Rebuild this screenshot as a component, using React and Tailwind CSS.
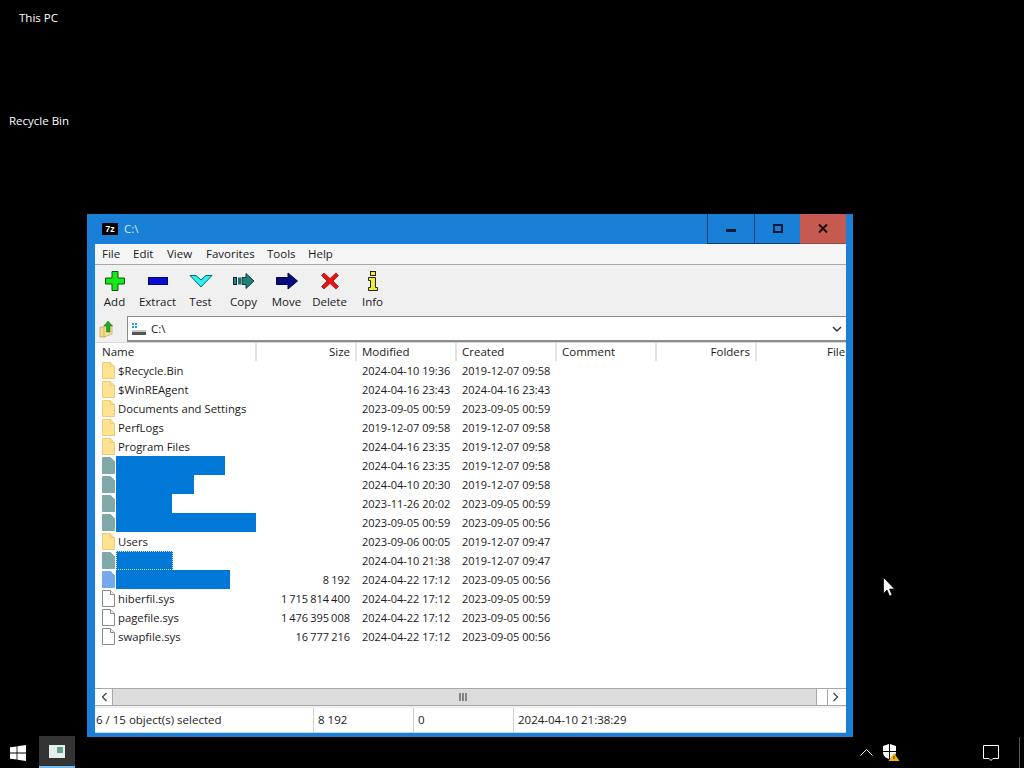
const font = { fontFamily: '"Open Sans", "Noto Sans", sans-serif' };

const rows = [
  { n: '$Recycle.Bin', m: '2024-04-10 19:36', c: '2019-12-07 09:58', t: 'folder' },
  { n: '$WinREAgent', m: '2024-04-16 23:43', c: '2024-04-16 23:43', t: 'folder' },
  { n: 'Documents and Settings', m: '2023-09-05 00:59', c: '2023-09-05 00:59', t: 'folder' },
  { n: 'PerfLogs', m: '2019-12-07 09:58', c: '2019-12-07 09:58', t: 'folder' },
  { n: 'Program Files', m: '2024-04-16 23:35', c: '2019-12-07 09:58', t: 'folder' },
  { w: 'w-[109px]', m: '2024-04-16 23:35', c: '2019-12-07 09:58', t: 'sel' },
  { w: 'w-[78px]', m: '2024-04-10 20:30', c: '2019-12-07 09:58', t: 'sel' },
  { w: 'w-[56px]', m: '2023-11-26 20:02', c: '2023-09-05 00:59', t: 'sel' },
  { w: 'w-[140px]', m: '2023-09-05 00:59', c: '2023-09-05 00:56', t: 'sel' },
  { n: 'Users', m: '2023-09-06 00:05', c: '2019-12-07 09:47', t: 'folder' },
  { w: 'w-[57px]', m: '2024-04-10 21:38', c: '2019-12-07 09:47', t: 'sel', focus: true },
  { w: 'w-[114px]', s: '8 192', m: '2024-04-22 17:12', c: '2023-09-05 00:56', t: 'selfile' },
  { n: 'hiberfil.sys', s: '1 715 814 400', m: '2024-04-22 17:12', c: '2023-09-05 00:59', t: 'file' },
  { n: 'pagefile.sys', s: '1 476 395 008', m: '2024-04-22 17:12', c: '2023-09-05 00:56', t: 'file' },
  { n: 'swapfile.sys', s: '16 777 216', m: '2024-04-22 17:12', c: '2023-09-05 00:56', t: 'file' },
];

const iconFill = { folder: '#fde28f', sel: '#82a9a9', selfile: '#74aaeb', file: '#ffffff' };
const iconLine = { folder: '#e6cd80', sel: '#82a9a9', selfile: '#74aaeb', file: '#8a8a8a' };

function RowIcon({ t }) {
  return (
    <svg width="13" height="17" viewBox="0 0 13 17" className="shrink-0">
      <path d="M0.5 0.5H8.5L12.5 4.5V16.5H0.5Z" fill={iconFill[t]} stroke={iconLine[t]} />
      <path d="M8.5 0.5V4.5H12.5" fill={t === 'file' ? '#f0f0f0' : iconFill[t]} stroke={iconLine[t]} />
    </svg>
  );
}

const tools = [
  { l: 'Add', i: <svg width="20" height="20" viewBox="0 0 20 20"><path d="M7 0.5H13V7H19.5V13H13V19.5H7V13H0.5V7H7Z" fill="#19e619" stroke="#0a5a0a" /></svg> },
  { l: 'Extract', i: <svg width="20" height="20" viewBox="0 0 20 20"><rect x="0.5" y="6.5" width="19" height="7" fill="#0a0ad0" stroke="#05056a" /></svg> },
  { l: 'Test', i: <svg width="24" height="20" viewBox="0 0 24 20"><path d="M1 4.5H7L12 9L17 4.5H23L12 16Z" fill="#2ff0f0" stroke="#0b6a6a" /></svg> },
  { l: 'Copy', i: <svg width="22" height="20" viewBox="0 0 22 20"><rect x="0.5" y="6.5" width="3" height="7" fill="#2a8a80" stroke="#123" /><rect x="5" y="6.5" width="3" height="7" fill="#1f6f6a" /><path d="M9 6.5H13V2.5L21 10L13 17.5V13.5H9Z" fill="#1f8078" stroke="#0a3a3a" /></svg> },
  { l: 'Move', i: <svg width="22" height="20" viewBox="0 0 22 20"><path d="M0.5 6.5H12V2L21.5 10L12 18V13.5H0.5Z" fill="#0a0a80" stroke="#05053a" /></svg> },
  { l: 'Delete', i: <svg width="18" height="18" viewBox="0 0 18 18"><path d="M3 1L9 6.5L15 1L17.5 3.5L12 9L17.5 14.5L15 17L9 11.5L3 17L0.5 14.5L6 9L0.5 3.5Z" fill="#e81010" stroke="#8a1010" strokeWidth="0.7" /></svg> },
  { l: 'Info', i: <svg width="12" height="20" viewBox="0 0 12 20"><rect x="3.5" y="0.5" width="5" height="4" fill="#ecec30" stroke="#222" /><path d="M1.5 6.5H8.5V16.5H10.5V19.5H1.5V16.5H3.5V9.5H1.5Z" fill="#ecec30" stroke="#222" /></svg> },
];

const Header = ({ w, right, children, pl }) => (
  <div className={`${w} h-full flex items-center pb-[1px] ${pl || 'pl-[5px]'} pr-[5px] ${right ? 'justify-end' : ''} border-r-2 border-r-[#e4e4e4] overflow-hidden`}>{children}</div>
);

export default function App() {
  return (
    <div className="relative w-[1024px] h-[768px] bg-black overflow-hidden text-[11.5px] text-[#1a1a1a]" style={font}>
      <div className="absolute left-[19px] top-[10px] text-white leading-[16px]">This PC</div>
      <div className="absolute left-[9px] top-[113px] text-white leading-[16px]">Recycle Bin</div>

      <div className="absolute left-[87px] top-[214px] w-[766px] h-[523px] bg-[#1a7fd6] flex flex-col pl-[8px] pr-[7px] pb-[4px]">
        <div className="h-[30px] shrink-0 flex items-center relative">
          <div className="ml-[7px] w-[16px] h-[12px] bg-white border border-black flex items-center justify-center">
            <span className="bg-black text-white text-[9px] leading-[10px] font-bold w-[14px] h-[10px] text-center" style={{ fontFamily: '"Liberation Sans", sans-serif' }}>7z</span>
          </div>
          <span className="ml-[6px] text-[#d5ecff]">C:\</span>
          <div className="ml-auto flex h-full">
            <div className="w-[47px] border-l border-b border-l-[#0b3f6e] border-b-[#0b3f6e] flex items-center justify-center pt-[3px]"><div className="w-[10px] h-[3px] bg-[#0b1b33]" /></div>
            <div className="w-[46px] border-l border-b border-l-[#0b3f6e] border-b-[#0b3f6e] flex items-center justify-center"><div className="w-[10px] h-[9px] border-2 border-[#0b1b33]" /></div>
            <div className="w-[46px] bg-[#c75a50] border-b border-b-[#8e4a48] flex items-center justify-center">
              <svg width="10" height="9" viewBox="0 0 10 9"><path d="M1 0.5L9 8.5M9 0.5L1 8.5" stroke="#1a0a0a" strokeWidth="2" /></svg>
            </div>
          </div>
        </div>

        <div className="flex-1 bg-white flex flex-col min-h-0">
          <div className="h-[21px] shrink-0 bg-[#f5f5f5] border-b border-b-[#a8a8a8] flex items-center pb-[1px]">
            {[['File', 'w-[38px]'], ['Edit', 'w-[34px]'], ['View', 'w-[39px]'], ['Favorites', 'w-[61px]'], ['Tools', 'w-[41px]'], ['Help', 'w-[40px]']].map(([m, w], i) => (
              <span key={m} className={`${w} ${i === 0 ? 'pl-[7px]' : ''}`}>{m}</span>
            ))}
          </div>

          <div className="h-[51px] shrink-0 bg-[#f0f0f0] flex">
            {tools.map((t, i) => (
              <div key={t.l} className={`w-[43px] h-full flex flex-col items-center ${i === 0 ? 'ml-[-2px]' : ''}`}>
                <div className="h-[20px] mt-[6px] flex items-center justify-center">{t.i}</div>
                <div className="mt-[3px] leading-[16px]">{t.l}</div>
              </div>
            ))}
          </div>

          <div className="h-[26px] shrink-0 bg-[#f0f0f0] flex items-center">
            <div className="w-[32px] h-full flex items-center pl-[4px]">
              <svg width="16" height="18" viewBox="0 0 16 18">
                <path d="M1 7H6V17H1Z" fill="#f2dc8c" stroke="#b9a050" strokeWidth="0.7" />
                <path d="M5 5H13V14L5 17Z" fill="#f5e19a" stroke="#c0a858" strokeWidth="0.7" />
                <path d="M9 1L13.5 6H11V12H7.5V6H5Z" fill="#28a828" stroke="#0e6a0e" strokeWidth="0.5" />
              </svg>
            </div>
            <div className="flex-1 h-full bg-white border-t border-l border-b-2 border-t-[#8c8c8c] border-l-[#8c8c8c] border-b-[#8c8c8c] flex items-center pl-[3px] pr-[4px]">
              <svg width="16" height="14" viewBox="0 0 16 14">
                <rect x="1" y="1" width="2" height="2" fill="#1aa5e0" /><rect x="4" y="1" width="2" height="2" fill="#1aa5e0" />
                <rect x="1" y="4" width="2" height="2" fill="#1aa5e0" /><rect x="4" y="4" width="2" height="2" fill="#1aa5e0" />
                <rect x="1" y="8" width="14" height="2" fill="#c8c8c8" /><rect x="1" y="10" width="14" height="3" fill="#555" />
              </svg>
              <span className="ml-[4px]">C:\</span>
              <svg className="ml-auto" width="10" height="8" viewBox="0 0 10 8"><path d="M1 2L5 6L9 2" fill="none" stroke="#333" strokeWidth="1.5" /></svg>
            </div>
          </div>

          <div className="h-[19px] shrink-0 border-t border-t-[#d8d8d8] bg-white flex items-center">
            <Header w="w-[162px]" pl="pl-[7px]">Name</Header>
            <Header w="w-[100px]" right>Size</Header>
            <Header w="w-[100px]">Modified</Header>
            <Header w="w-[100px]">Created</Header>
            <Header w="w-[100px]">Comment</Header>
            <Header w="w-[100px]" right>Folders</Header>
            <div className="flex-1 h-full flex items-center pb-[1px] pl-[70px]">File</div>
          </div>

          <div className="flex-1 flex flex-col min-h-0 bg-white">
            {rows.map((r, i) => (
              <div key={i} className="h-[19px] shrink-0 flex items-center leading-[19px]">
                <div className="w-[161px] flex items-center pl-[7px] h-full">
                  <RowIcon t={r.t} />
                  {r.n ? (
                    <span className="ml-[3px] whitespace-nowrap text-[11.3px]">{r.n}</span>
                  ) : (
                    <div className={`${r.w} ml-[1px] h-[19px] bg-[#0078d7] ${r.focus ? 'border border-dotted border-[#cfe4f7]' : ''}`} />
                  )}
                </div>
                <div className="w-[100px] text-right pr-[6px] whitespace-nowrap text-[11px] [word-spacing:-0.8px]">{r.s}</div>
                <div className="w-[100px] pl-[6px] whitespace-nowrap text-[11px]">{r.m}</div>
                <div className="w-[100px] pl-[6px] whitespace-nowrap text-[11px]">{r.c}</div>
              </div>
            ))}
          </div>

          <div className="h-[18px] shrink-0 border-y border-y-[#a8a8a8] bg-white flex items-stretch pl-[1px] pr-[3px]">
            <div className="w-[17px] border-r border-r-[#a8a8a8] flex items-center justify-center">
              <svg width="7" height="10" viewBox="0 0 7 10"><path d="M5.5 1L1.5 5L5.5 9" fill="none" stroke="#444" strokeWidth="1.3" /></svg>
            </div>
            <div className="flex-1 bg-[#dcdcdc] flex items-center justify-center pr-[3px] pb-[1px]">
              <svg width="8" height="8" viewBox="0 0 8 8"><path d="M1 0V8M4 0V8M7 0V8" stroke="#555" strokeWidth="1.3" /></svg>
            </div>
            <div className="w-[11px] border-l border-l-[#a8a8a8]" />
            <div className="w-[16px] border-l border-l-[#a8a8a8] flex items-center justify-center">
              <svg width="7" height="10" viewBox="0 0 7 10"><path d="M1.5 1L5.5 5L1.5 9" fill="none" stroke="#444" strokeWidth="1.3" /></svg>
            </div>
          </div>

          <div className="h-[27px] shrink-0 pt-[2px] bg-[#f0f0f0] flex flex-col">
            <div className="flex-1 bg-white flex items-center border-b border-b-[#c8d4e0]">
              <div className="w-[219px] pl-[1px] pb-[1px] h-full flex items-center border-r border-r-[#d0d0d0]">6 / 15 object(s) selected</div>
              <div className="w-[100px] pl-[4px] pb-[1px] h-full flex items-center border-r border-r-[#d0d0d0]">8 192</div>
              <div className="w-[100px] pl-[4px] pb-[1px] h-full flex items-center border-r border-r-[#d0d0d0]">0</div>
              <div className="pl-[4px] pb-[1px] h-full flex items-center">2024-04-10 21:38:29</div>
            </div>
          </div>
        </div>
      </div>

      <svg className="absolute left-[10px] top-[745px]" width="16" height="16" viewBox="0 0 16 16">
        <path d="M0 2.3L6.6 1.4V7.6H0ZM7.4 1.3L16 0V7.6H7.4ZM0 8.4H6.6V14.6L0 13.7ZM7.4 8.4H16V16L7.4 14.7Z" fill="#fff" />
      </svg>
      <div className="absolute left-[39px] top-[736px] w-[36px] h-[32px] bg-[#333] border-b-2 border-b-[#76b9ed] flex items-center justify-center">
        <div className="w-[16px] h-[13px] bg-[#e8eeea] flex items-start justify-end p-[2px]"><div className="w-[6px] h-[6px] bg-[#5f9e90]" /></div>
      </div>
      <svg className="absolute left-[860px] top-[748px]" width="13" height="9" viewBox="0 0 13 9"><path d="M0.5 7.5L6.5 1.5L12.5 7.5" fill="none" stroke="#fff" strokeWidth="1" /></svg>
      <svg className="absolute left-[882px] top-[744px]" width="18" height="18" viewBox="0 0 18 18">
        <path d="M1 2L7 0V7H1ZM8 0L14 2V7H8ZM1 8H7V15C4 14 1 12 1 8ZM8 8H14C14 10 13 12 11 13L8 15Z" fill="#fff" />
        <path d="M12 9L17.5 17H6.5Z" fill="#f5b400" />
        <path d="M12 12V15" stroke="#222" strokeWidth="1" />
      </svg>
      <svg className="absolute left-[983px] top-[745px]" width="17" height="17" viewBox="0 0 17 17"><path d="M0.5 0.5H15.5V13.5H10L8 15.5L6 13.5H0.5Z" fill="none" stroke="#fff" strokeWidth="1" /></svg>
      <div className="absolute left-[1019px] top-[737px] w-px h-[31px] bg-[#555]" />
      <svg className="absolute left-[883px] top-[577px]" width="12" height="20" viewBox="0 0 12 20">
        <path d="M0.5 0.5V16.5L4 13L6.5 19L9 18L6.5 12H11.5Z" fill="#fff" stroke="#000" strokeWidth="0.7" />
      </svg>
    </div>
  );
}
